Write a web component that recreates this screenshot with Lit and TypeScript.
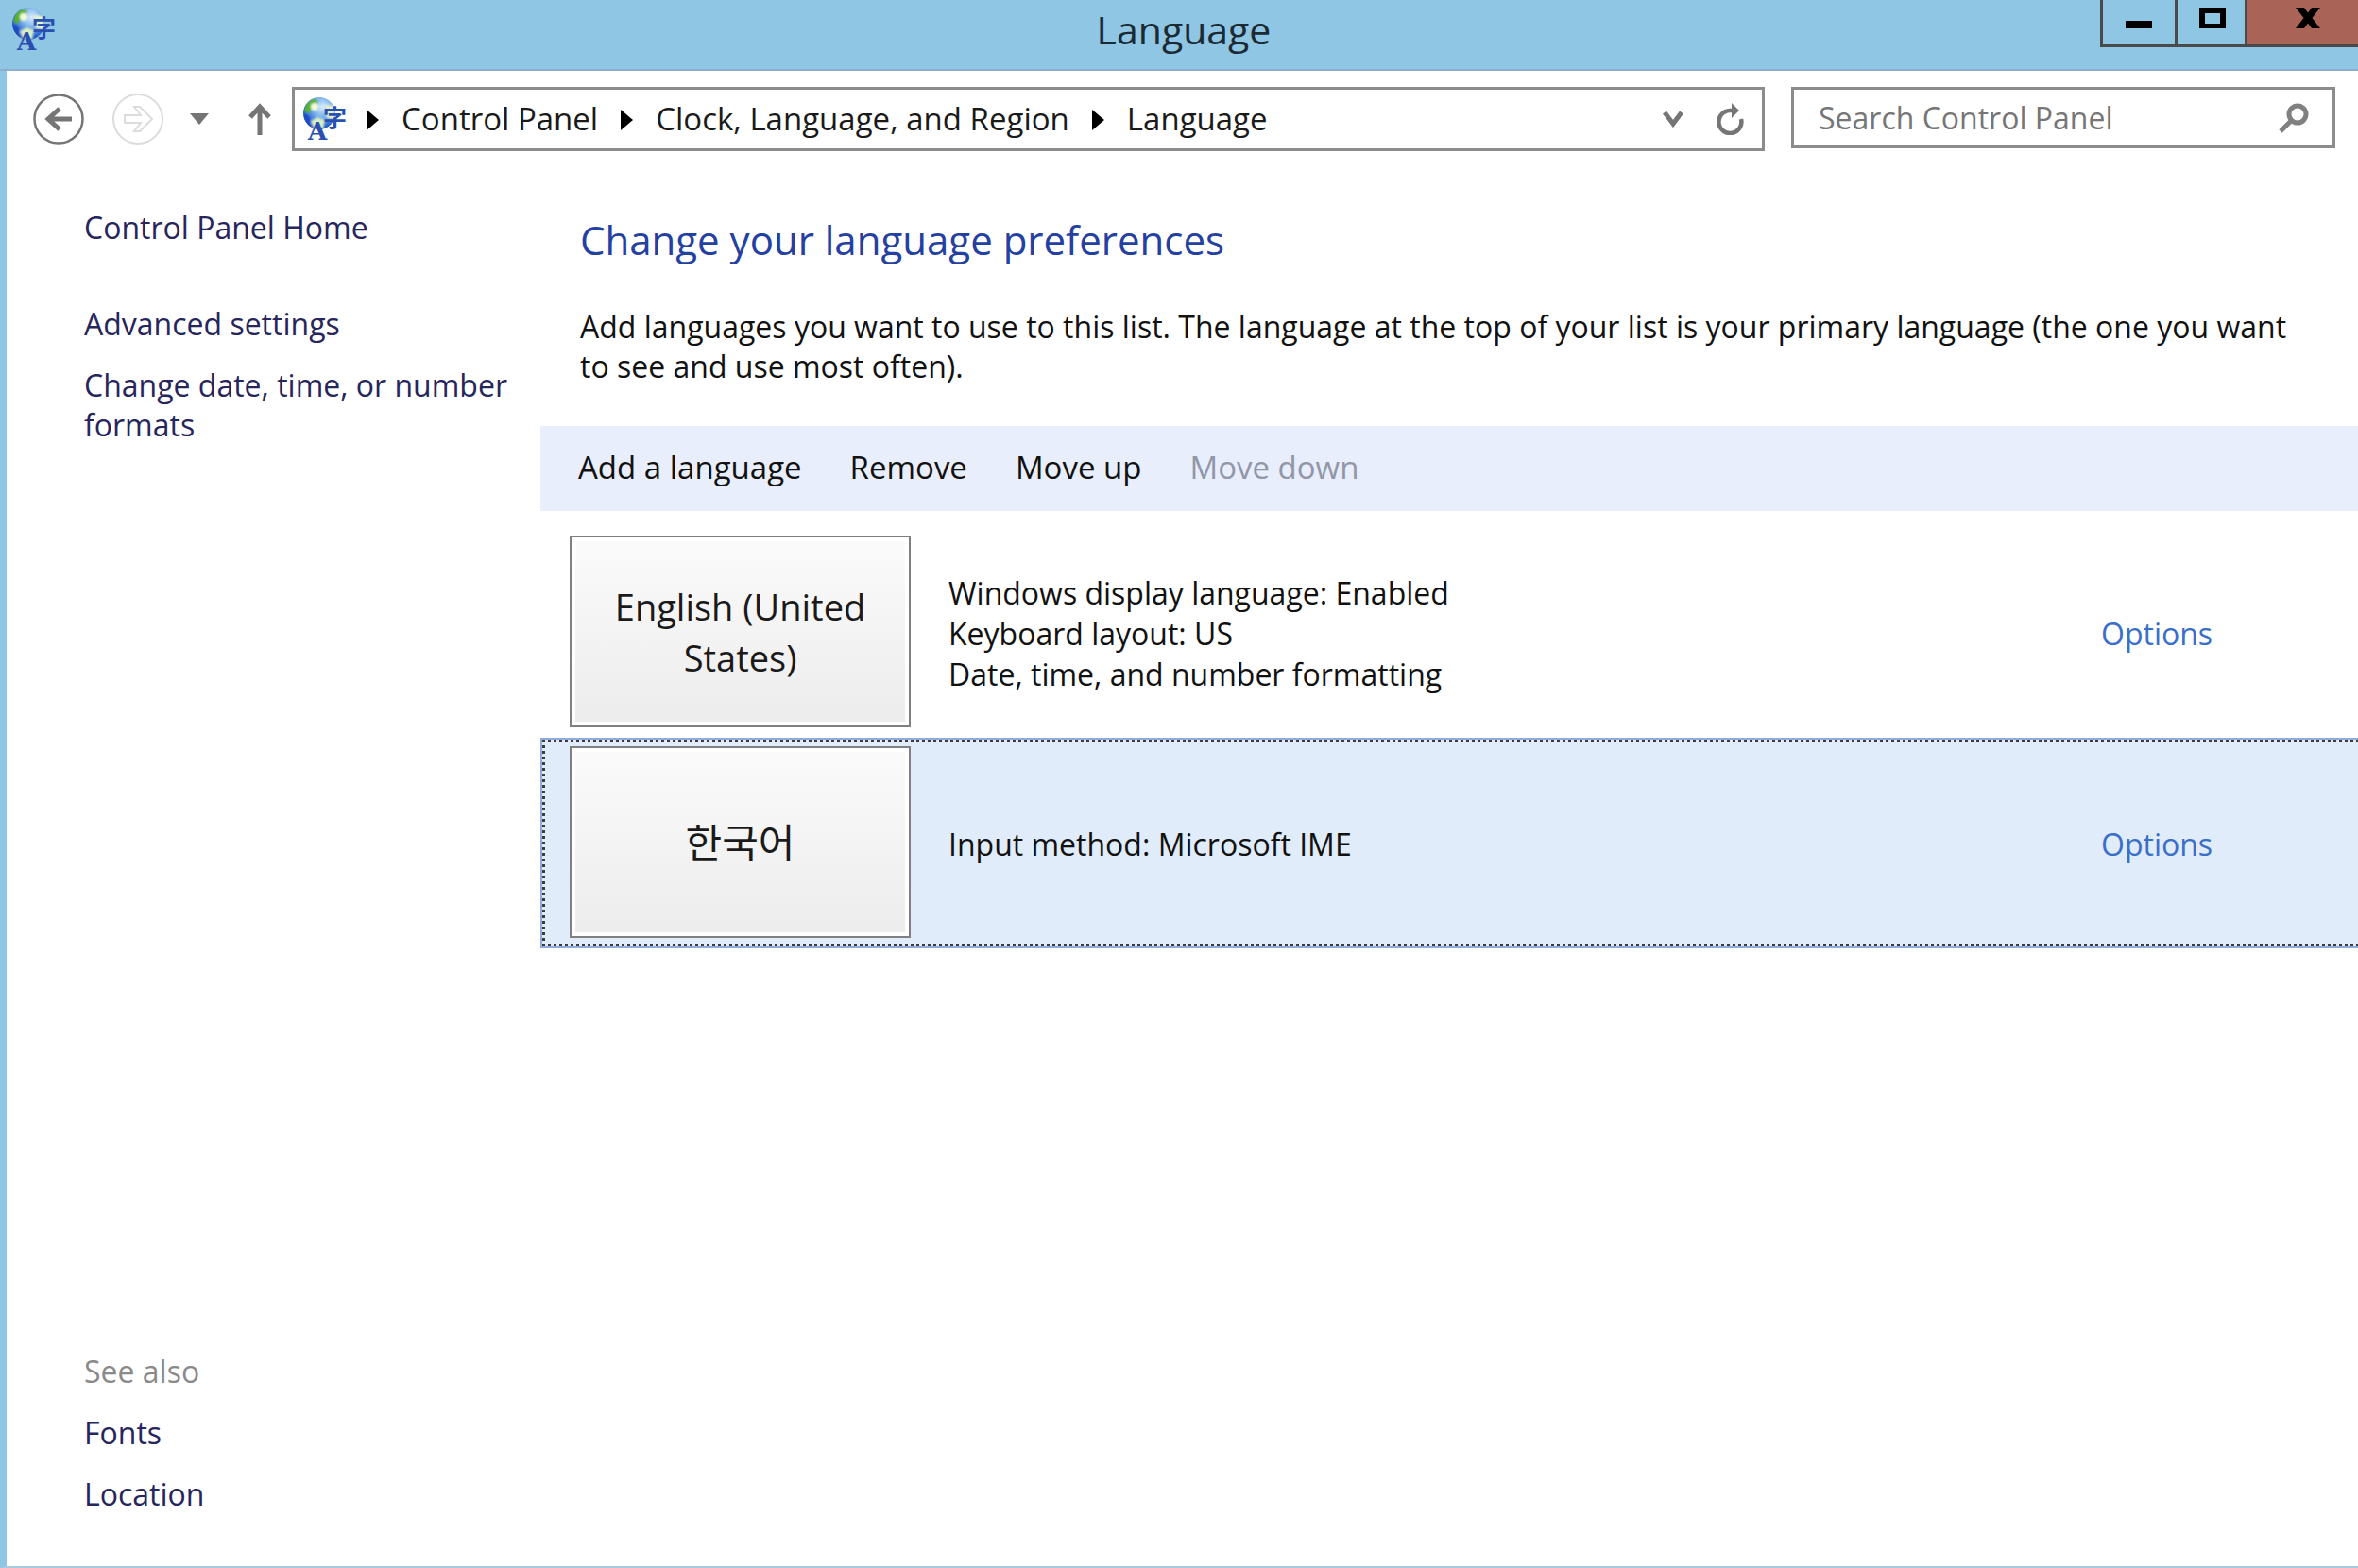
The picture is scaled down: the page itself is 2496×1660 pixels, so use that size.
import { LitElement, html, css, nothing } from "lit";
import { customElement, property } from "lit/decorators.js";
import { classMap } from "lit/directives/class-map.js";

interface Language {
  name: string;
  lang: string;
  details: string[];
  selected: boolean;
}

const LANGUAGES: Language[] = [
  {
    name: "English (United States)",
    lang: "en",
    details: [
      "Windows display language: Enabled",
      "Keyboard layout: US",
      "Date, time, and number formatting",
    ],
    selected: false,
  },
  { name: "한국어", lang: "ko", details: ["Input method: Microsoft IME"], selected: true },
];

const CRUMBS = ["Control Panel", "Clock, Language, and Region", "Language"];

@customElement("language-icon")
export class LanguageIcon extends LitElement {
  static styles = css`
    :host {
      display: block;
      flex: none;
      width: 46px;
      height: 46px;
    }
    .icon {
      display: block;
      width: 100%;
      height: 100%;
      overflow: visible;
    }
    .latin {
      font: bold 26px "DejaVu Serif", serif;
      fill: #2a4fb0;
    }
    .han {
      font: bold 25px "Noto Sans CJK JP", sans-serif;
      fill: #2a4fb0;
    }
  `;

  render() {
    return html`<svg class="icon" viewBox="0 0 46 46" aria-hidden="true">
      <defs>
        <radialGradient id="sea" cx="0.6" cy="0.3" r="0.75">
          <stop offset="0" stop-color="#d8ecff" />
          <stop offset="0.4" stop-color="#7db4ee" />
          <stop offset="0.8" stop-color="#2460cf" />
          <stop offset="1" stop-color="#1c3f9c" />
        </radialGradient>
        <filter id="soft"><feGaussianBlur stdDeviation="1.2" /></filter>
        <clipPath id="disc"><circle cx="18" cy="17" r="17" /></clipPath>
      </defs>
      <circle cx="18" cy="17" r="17" fill="url(#sea)" />
      <g clip-path="url(#disc)" filter="url(#soft)">
        <path d="M2 15 Q3 5 12 2 L17 4 L14 9 L9 13 L7 17 Z" fill="#58b32c" />
        <ellipse cx="13" cy="10" rx="4" ry="4" fill="#f2fbd8" />
        <path d="M24 8 L34 9 L35 24 L26 22 Z" fill="#e6f5c8" />
        <path d="M9 25 L16 21 L24 24 L22 34 L12 33 Z" fill="#d9efc4" />
        <path d="M1 18 Q4 26 9 31 L9 24 L5 18 Z" fill="#1e49c4" />
      </g>
      <text class="han" x="22" y="31">字</text>
      <text class="latin" x="6" y="45">A</text>
    </svg>`;
  }
}

@customElement("window-titlebar")
export class WindowTitlebar extends LitElement {
  @property() heading = "";

  static styles = css`
    :host {
      display: grid;
      grid-template-columns: 1fr auto 1fr;
      align-items: start;
      height: 75px;
      background: #8fc6e4;
      border-bottom: 2px solid #8eaed0;
      box-sizing: border-box;
    }
    .icon {
      margin: 8px 0 0 12px;
    }
    .title {
      margin: 0;
      padding: 4px 0 0 10px;
      font-size: 41px;
      font-weight: 400;
      line-height: 54px;
      color: #1b2a33;
    }
    .controls {
      display: flex;
      justify-self: end;
      border: 3px solid #4a4a4a;
      border-width: 0 0 3px 3px;
    }
    .control {
      display: flex;
      align-items: flex-start;
      justify-content: center;
      width: 79px;
      height: 47px;
      padding: 8px 0 0;
      border: 0;
      border-right: 3px solid #4a4a4a;
      box-sizing: border-box;
      background: #8fc6e4;
      color: #000;
    }
    .maximize {
      width: 74px;
      padding-left: 3px;
    }
    .close {
      width: 117px;
      padding-left: 10px;
      border-right: 0;
      background: #a96457;
    }
    .glyph {
      display: block;
      width: 28px;
      height: 22px;
    }
  `;

  render() {
    return html`
      <language-icon class="icon"></language-icon>
      <h1 class="title">${this.heading}</h1>
      <div class="controls">
        <button class="control" aria-label="Minimize">
          <svg class="glyph" viewBox="0 0 28 22"><path d="M0 14h28v8H0z" /></svg>
        </button>
        <button class="control maximize" aria-label="Maximize">
          <svg class="glyph" viewBox="0 0 28 22">
            <path fill-rule="evenodd" d="M0 0h28v22H0zM6 6v11h16V6z" />
          </svg>
        </button>
        <button class="control close" aria-label="Close">
          <svg class="glyph" viewBox="0 0 28 22">
            <path d="M1 0h9l4 5.500 4-5.500h9l-8.500 11L27 22h-9l-4-5.500L10 22H1l8.500-11z" />
          </svg>
        </button>
      </div>
    `;
  }
}

@customElement("navigation-bar")
export class NavigationBar extends LitElement {
  static styles = css`
    :host {
      display: flex;
      align-items: flex-start;
      padding: 17px 24px 0 28px;
    }
    .history {
      display: flex;
      align-items: center;
      flex: none;
      width: 274px;
      height: 68px;
    }
    .nav {
      display: block;
      padding: 0;
      border: 0;
      background: none;
    }
    .svg {
      display: block;
    }
    .forward {
      margin-left: 30px;
    }
    .recent {
      margin-left: 28px;
    }
    .up {
      margin-left: 42px;
    }
    .address {
      display: flex;
      align-items: center;
      flex: 1;
      height: 68px;
      padding: 0 18px 0 8px;
      border: 3px solid #8c8c8c;
      box-sizing: border-box;
    }
    .crumbs {
      display: flex;
      align-items: center;
      flex: 1;
      margin: 0;
      padding: 0;
      list-style: none;
      font-size: 33px;
    }
    .crumb {
      display: flex;
      align-items: center;
    }
    .arrow {
      display: block;
      margin: 2px 24px 0;
    }
    .crumb:first-child .arrow {
      margin-left: 22px;
    }
    .link {
      color: #1a1a1a;
      text-decoration: none;
      line-height: 44px;
    }
    .refresh {
      margin-left: 35px;
    }
    .search {
      display: flex;
      align-items: center;
      justify-content: space-between;
      width: 576px;
      height: 65px;
      margin-left: 28px;
      padding: 0 25px 0 26px;
      border: 3px solid #8c8c8c;
      box-sizing: border-box;
    }
    .field {
      flex: 1;
      min-width: 0;
      padding: 0;
      border: 0;
      outline: 0;
      background: none;
      font: inherit;
      line-height: 44px;
      color: #1a1a1a;
    }
    .field::placeholder {
      color: #767676;
      opacity: 1;
    }
  `;

  render() {
    return html`
      <nav class="history" aria-label="History">
        <button class="nav" aria-label="Back">
          <svg class="svg" width="54" height="54" viewBox="0 0 54 54" fill="none" stroke="#757575">
            <circle cx="27" cy="27" r="25.500" stroke-width="2.500" />
            <path d="M41 27H16M28 16L16 27l12 11" stroke-width="5" />
          </svg>
        </button>
        <button class="nav forward" aria-label="Forward" disabled>
          <svg class="svg" width="54" height="54" viewBox="0 0 54 54" fill="none" stroke="#dcdcdc" stroke-width="2">
            <circle cx="27" cy="27" r="26" />
            <path d="M13 23h17l-7-9h6l13 13-13 13h-6l7-9H13z" />
          </svg>
        </button>
        <button class="nav recent" aria-label="Recent locations">
          <svg class="svg" width="20" height="12" viewBox="0 0 20 12"><path d="M0 0h20L10 12z" fill="#757575" /></svg>
        </button>
        <button class="nav up" aria-label="Up one level">
          <svg class="svg" width="24" height="34" viewBox="0 0 24 34" fill="none" stroke="#757575" stroke-width="5">
            <path d="M12 34V4M2 15L12 4l10 11" />
          </svg>
        </button>
      </nav>
      <div class="address">
        <language-icon></language-icon>
        <ol class="crumbs">
          ${CRUMBS.map(
            (crumb) => html`<li class="crumb">
              <svg class="arrow" width="13" height="22" viewBox="0 0 13 22"><path d="M0 0l13 11L0 22z" /></svg>
              <a class="link" href="#">${crumb}</a>
            </li>`,
          )}
        </ol>
        <button class="nav" aria-label="Previous locations">
          <svg class="svg" width="22" height="18" viewBox="0 0 22 18" fill="none" stroke="#757575" stroke-width="5">
            <path d="M2 2l9 12 9-12" />
          </svg>
        </button>
        <button class="nav refresh" aria-label="Refresh">
          <svg class="svg" width="30" height="34" viewBox="0 0 30 34" fill="none" stroke="#757575" stroke-width="4.500">
            <path d="M26 17A12 12 0 1 1 14 8h3" />
            <path d="M16 0l8 8-8 8z" fill="#757575" stroke="none" />
          </svg>
        </button>
      </div>
      <label class="search">
        <input class="field" type="search" aria-label="Search Control Panel" placeholder="Search Control Panel" />
        <svg class="svg" width="32" height="32" viewBox="0 0 32 32" fill="none" stroke="#808080" stroke-width="5">
          <circle cx="20" cy="12" r="9" />
          <path d="M14 18L2 30" />
        </svg>
      </label>
    `;
  }
}

@customElement("task-sidebar")
export class TaskSidebar extends LitElement {
  static styles = css`
    :host {
      display: flex;
      flex-direction: column;
      justify-content: space-between;
      padding: 60px 16px 55px 82px;
      box-sizing: border-box;
    }
    .group {
      display: flex;
      flex-direction: column;
      align-items: flex-start;
      gap: 23px;
    }
    .link {
      color: #26265c;
      text-decoration: none;
      line-height: 42px;
    }
    .home {
      margin-bottom: 37px;
    }
    .caption {
      margin: 0;
      color: #8a8a8a;
      font-size: inherit;
      font-weight: 400;
      line-height: 42px;
    }
  `;

  render() {
    return html`
      <nav class="group" aria-label="Tasks">
        <a class="link home" href="#">Control Panel Home</a>
        <a class="link" href="#">Advanced settings</a>
        <a class="link" href="#">Change date, time, or number formats</a>
      </nav>
      <nav class="group" aria-label="See also">
        <h2 class="caption">See also</h2>
        <a class="link" href="#">Fonts</a>
        <a class="link" href="#">Location</a>
      </nav>
    `;
  }
}

@customElement("language-row")
export class LanguageRow extends LitElement {
  @property({ attribute: false }) language!: Language;

  static styles = css`
    :host {
      display: block;
    }
    .row {
      display: grid;
      grid-template-columns: 361px 1fr 272px;
      align-items: center;
      column-gap: 40px;
      padding: 9px 0 11px 31px;
    }
    .selected {
      background:
        repeating-linear-gradient(90deg, #3c3c3c 0 3px, transparent 3px 6px) 2px 2px / 100% 3px no-repeat,
        repeating-linear-gradient(90deg, #3c3c3c 0 3px, transparent 3px 6px) 2px calc(100% - 2px) / 100% 3px no-repeat,
        repeating-linear-gradient(180deg, #3c3c3c 0 3px, transparent 3px 6px) 2px 2px / 3px calc(100% - 4px) no-repeat,
        #e0ecfa;
      box-shadow:
        inset 2px 0 #8fabdc,
        inset 0 2px #8fabdc,
        inset 0 -2px #8fabdc;
    }
    .tile {
      display: flex;
      align-items: center;
      justify-content: center;
      height: 203px;
      padding: 0 36px;
      border: 2px solid #808080;
      box-sizing: border-box;
      background: linear-gradient(#fbfbfb, #ececec);
      box-shadow: inset 0 0 0 4px #fff;
      color: #1a1a1a;
      font-size: 38px;
      line-height: 54px;
      text-align: center;
    }
    .tile:lang(ko) {
      font-size: 42px;
    }
    .details,
    .options {
      margin: 0;
      padding: 3px 0 0;
      line-height: 43px;
    }
    .details {
      list-style: none;
    }
    .options {
      justify-self: start;
      color: #3a6fc9;
      text-decoration: none;
    }
  `;

  render() {
    const { name, lang, details, selected } = this.language;
    return html`<div class=${classMap({ row: true, selected })} aria-current=${selected ? "true" : nothing}>
      <div class="tile" lang=${lang}>${name}</div>
      <ul class="details">
        ${details.map((line) => html`<li>${line}</li>`)}
      </ul>
      <a class="options" href="#">Options</a>
    </div>`;
  }
}

@customElement("app-root")
export class AppRoot extends LitElement {
  static styles = css`
    :host {
      display: flex;
      flex-direction: column;
      min-height: 100vh;
      background: #fff;
      color: #111;
      font-family: "Open Sans", "Noto Sans CJK KR", sans-serif;
      font-size: 32px;
    }
    .window {
      display: flex;
      flex-direction: column;
      flex: 1;
      border-left: 7px solid #8fc6e4;
      border-bottom: 2px solid #a9cbe0;
    }
    .content {
      display: grid;
      grid-template-columns: 565px 1fr;
      flex: 1;
    }
    .intro {
      padding: 66px 48px 42px 42px;
    }
    .heading {
      margin: 0 0 43px;
      color: #2440a0;
      font-size: 42px;
      font-weight: 400;
      line-height: 56px;
    }
    .text {
      margin: 0;
      line-height: 42px;
    }
    .toolbar {
      display: flex;
      align-items: center;
      gap: 51px;
      height: 90px;
      margin-bottom: 17px;
      padding: 0 0 3px 40px;
      background: #e8eefb;
      box-sizing: border-box;
      font-size: 33px;
    }
    .command {
      padding: 0;
      border: 0;
      background: none;
      color: #111;
      font: inherit;
    }
    .command:disabled {
      color: #9196a8;
    }
  `;

  render() {
    return html`
      <window-titlebar heading="Language"></window-titlebar>
      <div class="window">
        <navigation-bar></navigation-bar>
        <div class="content">
          <task-sidebar></task-sidebar>
          <main>
            <header class="intro">
              <h2 class="heading">Change your language preferences</h2>
              <p class="text">
                Add languages you want to use to this list. The language at the top of your list is your primary
                language (the one you want to see and use most often).
              </p>
            </header>
            <div class="toolbar" role="toolbar" aria-label="Language commands">
              <button class="command">Add a language</button>
              <button class="command">Remove</button>
              <button class="command">Move up</button>
              <button class="command" disabled>Move down</button>
            </div>
            ${LANGUAGES.map((language) => html`<language-row .language=${language}></language-row>`)}
          </main>
        </div>
      </div>
    `;
  }
}
